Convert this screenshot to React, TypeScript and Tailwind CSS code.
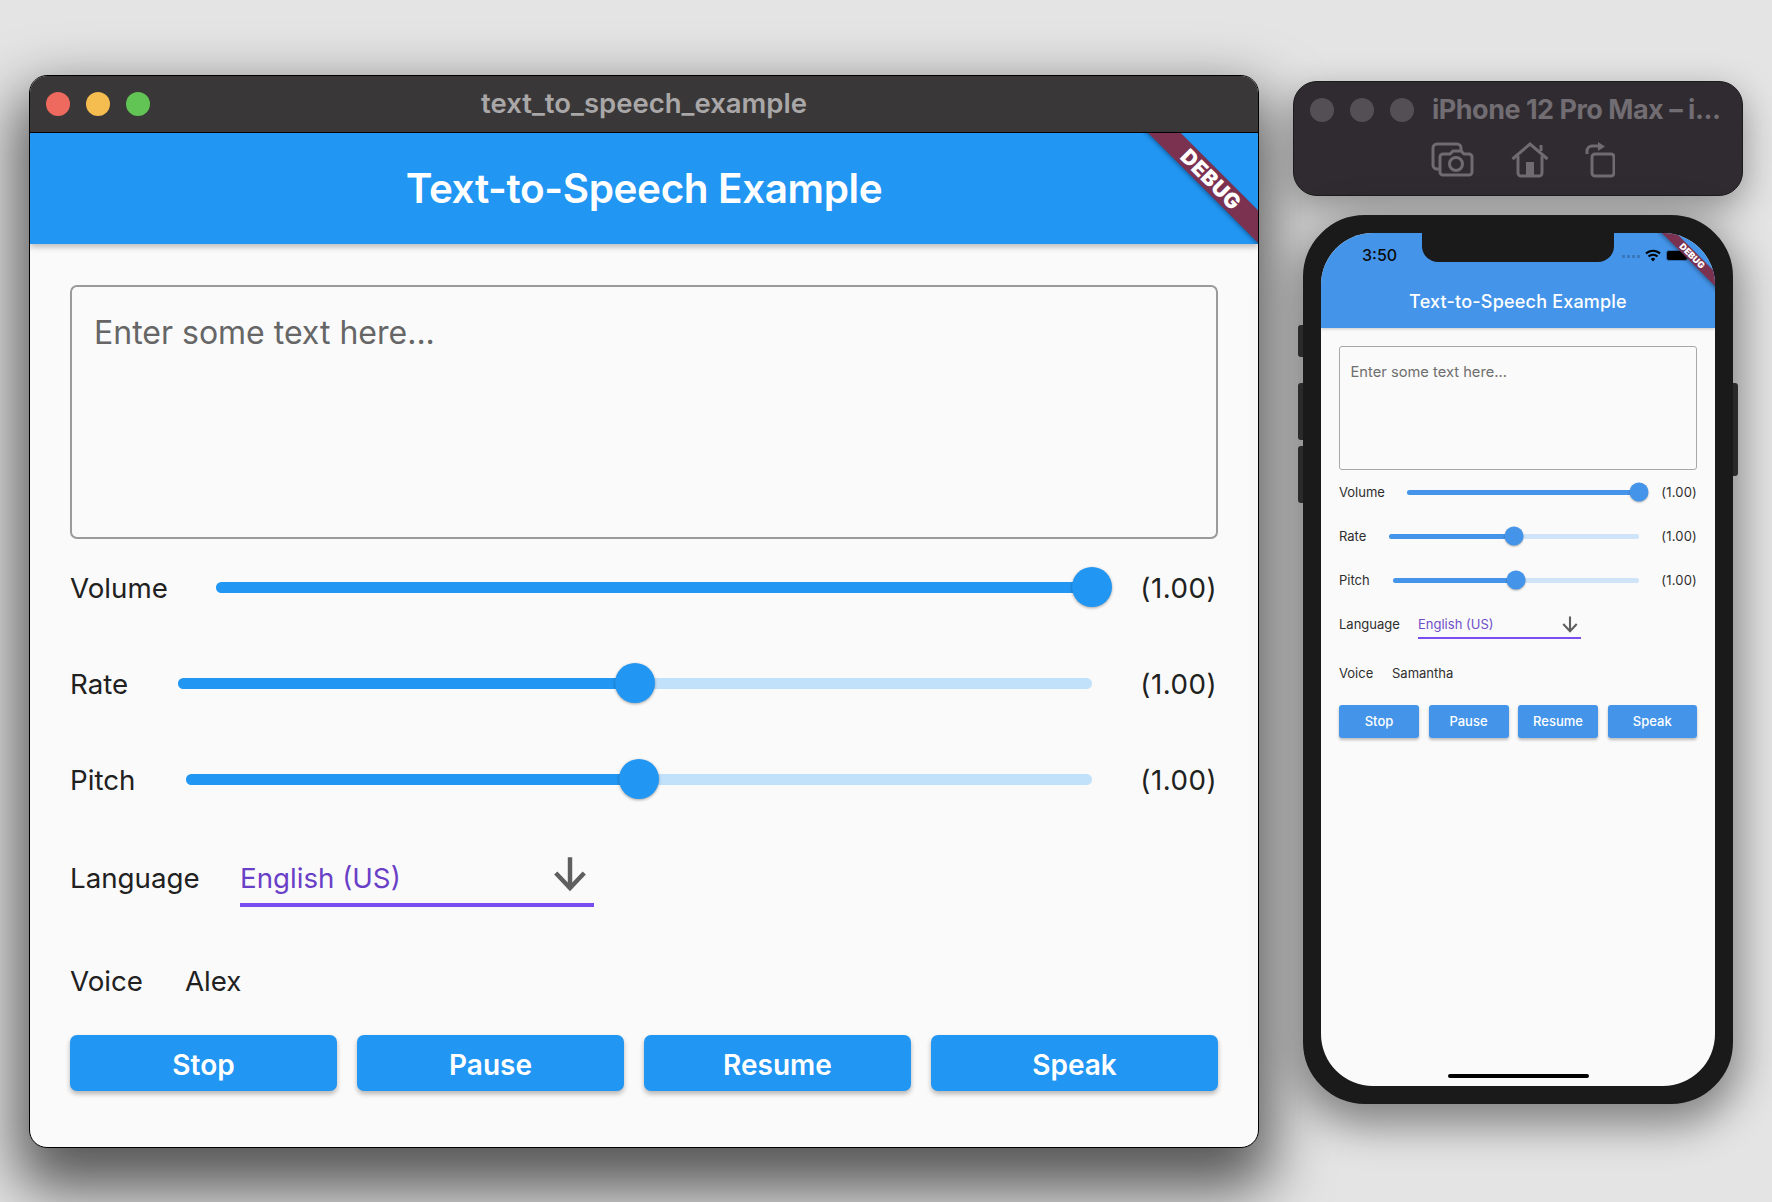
import React from 'react';

const FONT = "font-['Inter','Noto_Sans',sans-serif]";

function Slider({ fill, big }: { fill: number; big: boolean }) {
  return (
    <div className={`relative flex-1 rounded-full ${big ? 'h-[11px] bg-[#c1e0fa]' : 'h-[5px] bg-[#cfe4f9]'}`}>
      <div
        className={`h-full rounded-full ${big ? 'bg-[#2196f3]' : 'bg-[#4495ea]'}`}
        style={{ width: `${fill}%` }}
      />
      <div
        className={`absolute top-1/2 -translate-x-1/2 -translate-y-1/2 rounded-full ${
          big
            ? 'size-[40px] bg-[#2196f3] shadow-[0_1px_3px_rgba(0,0,0,0.35)]'
            : 'size-[19px] bg-[#4495ea] shadow-[0_1px_2px_rgba(0,0,0,0.3)]'
        }`}
        style={{ left: `${fill}%` }}
      />
    </div>
  );
}

function ArrowDown({ className }: { className: string }) {
  return (
    <svg viewBox="0 0 24 24" className={className} fill="none" stroke="#5f5f5f" strokeWidth="2.800">
      <path d="M12 2v19M3 12l9 9.500L21 12" />
    </svg>
  );
}

function DebugBanner({ big }: { big: boolean }) {
  return (
    <div
      className={`absolute rotate-45 flex items-center justify-center bg-[#7b3150] text-white font-black shadow-[0_2px_4px_rgba(0,0,0,0.3)] ${
        big
          ? 'right-[-53px] top-[35px] w-[200px] h-[23px] text-[21px] tracking-[0.5px]'
          : 'right-[-27px] top-[18px] w-[100px] h-[10px] text-[9px]'
      }`}
    >
      DEBUG
    </div>
  );
}

function MainWindow() {
  const rows = [
    { label: 'Volume', width: 'w-[146px]', fill: 100 },
    { label: 'Rate', width: 'w-[108px]', fill: 50 },
    { label: 'Pitch', width: 'w-[116px]', fill: 50 },
  ];
  return (
    <div className="w-[1230px] h-[1073px] shrink-0 flex flex-col rounded-[18px] overflow-hidden border border-black bg-[#fafafa] shadow-[0_30px_60px_12px_rgba(0,0,0,0.62)]">
      {/* title bar */}
      <div className="h-[57px] shrink-0 flex items-center relative bg-[#3a3738] border-b border-black">
        <div className="flex gap-[16px] pl-[16px]">
          <div className="size-[24px] rounded-full bg-[#ee6a5f]" />
          <div className="size-[24px] rounded-full bg-[#f5bd4f]" />
          <div className="size-[24px] rounded-full bg-[#61c454]" />
        </div>
        <div className="absolute inset-x-0 text-center text-[27.500px] font-semibold text-[#a9a7a7]">text_to_speech_example</div>
      </div>

      {/* app bar */}
      <div className="h-[111px] shrink-0 flex items-center justify-center relative overflow-hidden bg-[#2196f3] shadow-[0_3px_6px_rgba(0,0,0,0.25)] z-10">
        <span className="pt-[2px] text-[40.500px] font-semibold text-white tracking-[-0.4px]">Text-to-Speech Example</span>
        <DebugBanner big />
      </div>

      <div className="flex-1 flex flex-col px-[40px] pt-[41px] text-[#212121]">
        <div className="h-[254px] shrink-0 rounded-[7px] border-2 border-[#9a9a9a] px-[22px] pt-[27px] text-[32px] leading-[38px] text-[#666666]">
          Enter some text here...
        </div>

        {rows.map((r) => (
          <div key={r.label} className="h-[96px] shrink-0 flex items-center text-[27.700px]">
            <span className={`${r.width} shrink-0 pt-[3px]`}>{r.label}</span>
            <Slider fill={r.fill} big />
            <span className="w-[126px] shrink-0 text-right pr-[1px] pt-[3px] tracking-[0.5px]">(1.00)</span>
          </div>
        ))}

        <div className="h-[104px] shrink-0 flex items-start pt-[32px] text-[27.700px]">
          <span className="w-[170px] shrink-0 leading-[38px]">Language</span>
          <div className="w-[354px] h-[48px] flex items-start justify-between border-b-4 border-[#7a4df0]">
            <span className="leading-[38px] text-[#6a3fc8]">English (US)</span>
            <ArrowDown className="size-[38px] mr-[5px] mt-[-5px]" />
          </div>
        </div>

        <div className="flex items-center h-[64px] mt-[19px] text-[27.700px]">
          <span className="w-[115px] shrink-0">Voice</span>
          <span>Alex</span>
        </div>

        <div className="flex gap-[20px] mt-[21px] text-[28px] font-semibold text-white">
          <button className="w-[267px] h-[56px] pt-[3px] rounded-[7px] bg-[#2196f3] shadow-[0_3px_5px_rgba(0,0,0,0.28)]">Stop</button>
          <button className="w-[267px] h-[56px] pt-[3px] rounded-[7px] bg-[#2196f3] shadow-[0_3px_5px_rgba(0,0,0,0.28)]">Pause</button>
          <button className="w-[267px] h-[56px] pt-[3px] rounded-[7px] bg-[#2196f3] shadow-[0_3px_5px_rgba(0,0,0,0.28)]">Resume</button>
          <button className="w-[287px] h-[56px] pt-[3px] rounded-[7px] bg-[#2196f3] shadow-[0_3px_5px_rgba(0,0,0,0.28)]">Speak</button>
        </div>
      </div>
    </div>
  );
}

function SimToolbar() {
  return (
    <div className="w-[450px] h-[115px] rounded-[24px] border border-[#1d1b1e] bg-[#2f2b30] flex flex-col shadow-[0_12px_36px_rgba(0,0,0,0.38)]">
      <div className="flex items-center h-[56px] pl-[16px]">
        <div className="flex gap-[16px]">
          <div className="size-[24px] rounded-full bg-[#544f54]" />
          <div className="size-[24px] rounded-full bg-[#544f54]" />
          <div className="size-[24px] rounded-full bg-[#544f54]" />
        </div>
        <span className="ml-[18px] text-[27px] font-bold text-[#716d72] whitespace-nowrap tracking-[-0.5px]">iPhone 12 Pro Max – i...</span>
      </div>
      <div className="flex items-center pl-[137px] gap-[36px] mt-[4px]">
        <svg width="44" height="36" viewBox="0 0 44 36" fill="none" stroke="#6f6b70" strokeWidth="3">
          <path d="M9 27H6a4 4 0 0 1-4-4V6a4 4 0 0 1 4-4h20a4 4 0 0 1 4 4v3" />
          <path d="M12 12h7l3-3h8l3 3h5a3 3 0 0 1 3 3v15a3 3 0 0 1-3 3H12a3 3 0 0 1-3-3V15a3 3 0 0 1 3-3z" />
          <circle cx="25" cy="22" r="6.500" />
        </svg>
        <svg width="38" height="36" viewBox="0 0 38 36" fill="none" stroke="#6f6b70" strokeWidth="3">
          <path d="M1.500 17 19 2l17.500 15" />
          <path d="M7 14v17a3 3 0 0 0 3 3h18a3 3 0 0 0 3-3V14" />
          <path d="M30 9V3" />
          <rect x="15" y="20" width="8" height="14" fill="#6f6b70" stroke="none" />
        </svg>
        <svg width="30" height="36" viewBox="0 0 30 36" fill="none" stroke="#6f6b70" strokeWidth="3">
          <rect x="7" y="12" width="22" height="22" rx="3" />
          <path d="M2 12V9a5 5 0 0 1 5-5h6" />
          <path d="M13 0l7 4.500-7 4.500z" fill="#6f6b70" stroke="none" />
        </svg>
      </div>
    </div>
  );
}

function StatusBar() {
  return (
    <div className="h-[44px] flex items-center justify-between pl-[41px] pr-[27px]">
      <span className="text-[16px] font-medium text-[#0b0b0b]">3:50</span>
      <div className="flex items-center gap-[5px]">
        <div className="flex gap-[2px] mt-[3px]">
          <div className="size-[3px] bg-[#3a78bd]" />
          <div className="size-[3px] bg-[#3a78bd]" />
          <div className="size-[3px] bg-[#3a78bd]" />
          <div className="size-[3px] bg-[#3a78bd]" />
        </div>
        <svg width="16" height="13" viewBox="0 0 16 13" fill="none" stroke="#000" strokeWidth="2">
          <path d="M1 4.500a10 10 0 0 1 14 0" />
          <path d="M3.500 7.500a6.500 6.500 0 0 1 9 0" />
          <path d="M8 12.500 5.800 10a3 3 0 0 1 4.400 0z" fill="#000" stroke="none" />
        </svg>
        <div className="w-[22px] h-[11px] rounded-[3px] bg-black border border-[#2f6fb5]" />
      </div>
    </div>
  );
}

function Phone() {
  const rows = [
    { label: 'Volume', width: 'w-[68px]', fill: 100 },
    { label: 'Rate', width: 'w-[50px]', fill: 50 },
    { label: 'Pitch', width: 'w-[54px]', fill: 50 },
  ];
  return (
    <div className="relative ml-[10px] mt-[19px] w-[430px] h-[889px] rounded-[62px] border-[18px] border-[#1a1a1a] bg-[#1a1a1a] shadow-[0_14px_40px_8px_rgba(0,0,0,0.42)]">
      {/* side buttons */}
      <div className="absolute left-[-23px] top-[92px] w-[5px] h-[32px] rounded-l-[3px] bg-[#2a2a2a]" />
      <div className="absolute left-[-23px] top-[150px] w-[5px] h-[57px] rounded-l-[3px] bg-[#2a2a2a]" />
      <div className="absolute left-[-23px] top-[213px] w-[5px] h-[57px] rounded-l-[3px] bg-[#2a2a2a]" />
      <div className="absolute right-[-23px] top-[150px] w-[5px] h-[93px] rounded-r-[3px] bg-[#2a2a2a]" />

      <div className="relative w-[394px] h-[853px] flex flex-col overflow-hidden rounded-[52px] bg-[#fafafa] text-[#2e2e2e]">
        <div className="h-[95px] shrink-0 relative overflow-hidden bg-[#4495ea] shadow-[0_1px_3px_rgba(0,0,0,0.2)] z-10">
          <StatusBar />
          <div className="mt-[11px] text-center text-[18px] font-medium text-white tracking-[0.2px] leading-[28px]">Text-to-Speech Example</div>
          <DebugBanner big={false} />
        </div>
        {/* notch */}
        <div className="absolute z-20 left-[101px] top-0 w-[192px] h-[29px] rounded-b-[16px] bg-[#1a1a1a]" />

        <div className="flex-1 flex flex-col px-[18px] pt-[18px]">
          <div className="h-[124px] shrink-0 rounded-[3px] border border-[#a8a8a8] px-[10.500px] pt-[15px] text-[14.700px] leading-[20px] text-[#6f6f6f]">
            Enter some text here...
          </div>

          {rows.map((r) => (
            <div key={r.label} className="h-[44px] shrink-0 flex items-center text-[13px] first:mt-[1px]">
              <span className={`${r.width} shrink-0 pt-[1px]`}>{r.label}</span>
              <Slider fill={r.fill} big={false} />
              <span className="w-[58px] shrink-0 text-right pt-[1px] tracking-[0.2px]">(1.00)</span>
            </div>
          ))}

          <div className="h-[48px] shrink-0 flex items-start pt-[10px] text-[13px]">
            <span className="w-[79px] shrink-0 leading-[24px]">Language</span>
            <div className="w-[163px] h-[27px] flex items-start justify-between border-b-2 border-[#7a4df0]">
              <span className="leading-[24px] text-[#6f4fc9]">English (US)</span>
              <ArrowDown className="size-[18px] mr-[2px] mt-[3px]" />
            </div>
          </div>

          <div className="flex items-center h-[24px] mt-[12px] text-[13px]">
            <span className="w-[53px] shrink-0">Voice</span>
            <span>Samantha</span>
          </div>

          <div className="flex gap-[9.500px] mt-[19px] text-[13px] font-medium text-white">
            <button className="w-[80px] h-[33px] rounded-[3px] bg-[#4495ea] shadow-[0_2px_3px_rgba(0,0,0,0.25)]">Stop</button>
            <button className="w-[80px] h-[33px] rounded-[3px] bg-[#4495ea] shadow-[0_2px_3px_rgba(0,0,0,0.25)]">Pause</button>
            <button className="w-[80px] h-[33px] rounded-[3px] bg-[#4495ea] shadow-[0_2px_3px_rgba(0,0,0,0.25)]">Resume</button>
            <button className="flex-1 h-[33px] rounded-[3px] bg-[#4495ea] shadow-[0_2px_3px_rgba(0,0,0,0.25)]">Speak</button>
          </div>
        </div>

        <div className="absolute bottom-[8px] left-[127px] w-[141px] h-[4px] rounded-full bg-black" />
      </div>
    </div>
  );
}

export default function App() {
  return (
    <div className={`w-[1772px] h-[1202px] overflow-hidden flex items-start pl-[29px] pt-[75px] bg-[#e4e4e4] ${FONT}`}>
      <MainWindow />
      <div className="ml-[34px] mt-[6px] flex flex-col">
        <SimToolbar />
        <Phone />
      </div>
    </div>
  );
}
